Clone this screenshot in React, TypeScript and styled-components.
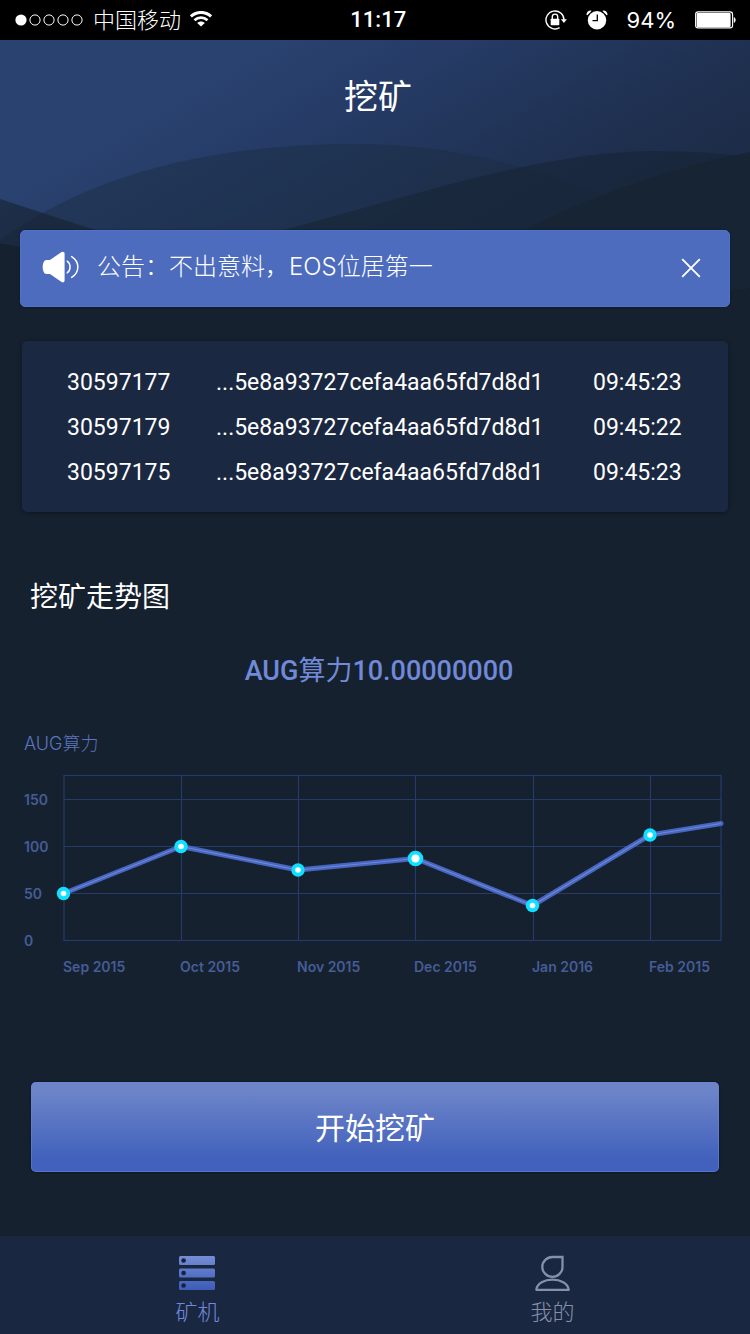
import React, { useState } from 'react';
import styled, { createGlobalStyle, css } from 'styled-components';

const sans = '"Inter", "Noto Sans CJK SC", sans-serif';
const digits = '"Roboto", "Noto Sans CJK SC", sans-serif';

const GlobalStyle = createGlobalStyle`
  *, *::before, *::after { box-sizing: border-box; }
  body { margin: 0; background: #16212f; }
  button { border: 0; padding: 0; background: none; font: inherit; color: inherit; cursor: pointer; }
`;

const Screen = styled.div`
  position: relative;
  display: flex;
  flex-direction: column;
  min-height: 100vh;
  background: #16212f;
  color: #fff;
  font-family: ${sans};
`;

const StatusBar = styled.div`
  position: relative;
  display: flex;
  align-items: center;
  justify-content: space-between;
  height: 40px;
  padding: 0 14px;
  background: #000;
  font-size: 22px;
  line-height: 40px;
`;

const StatusGroup = styled.div<{ $gap: number }>`
  display: flex;
  align-items: center;
  gap: ${(p) => p.$gap}px;
`;

const Carrier = styled.span`
  font-weight: 300;
`;

const Time = styled.time`
  font-family: ${digits};
  font-weight: 500;
`;

const Waves = styled.svg`
  position: absolute;
  top: 40px;
  left: 0;
  width: 100%;
  height: 260px;
`;

const Main = styled.main`
  position: relative;
  flex: 1;
  display: flex;
  flex-direction: column;
`;

const PageHeader = styled.header`
  height: 190px;
  padding: 32px 0 0 6px;
  text-align: center;
`;

const PageTitle = styled.h1`
  margin: 0;
  font-size: 34px;
  line-height: 50px;
  font-weight: 400;
`;

const Notice = styled.div`
  display: flex;
  align-items: center;
  height: 77px;
  margin: 0 20px;
  padding: 0 28px 2px 21px;
  border: 1px solid #5271cb;
  border-radius: 5px;
  background: #4d6cbe;
  box-shadow: 0 0 2px rgba(0, 0, 0, 0.4);
`;

const NoticeText = styled.p`
  flex: 1;
  margin: 0 0 0 17px;
  padding-bottom: 2px;
  font-size: 24px;
  line-height: 36px;
  font-weight: 300;
`;

const CloseButton = styled.button`
  display: flex;
  width: 20px;
  height: 20px;
`;

const LogCard = styled.section`
  margin: 34px 22px 0;
  padding: 19px 45px 17px;
  border-radius: 5px;
  background: #1b2842;
  box-shadow: 0 1px 4px rgba(0, 0, 0, 0.4);
`;

const LogTable = styled.table`
  width: 100%;
  table-layout: fixed;
  border-collapse: collapse;
  font-family: ${digits};
  font-size: 23px;
  line-height: 45px;
`;

const LogCell = styled.td<{ $width?: string }>`
  width: ${(p) => p.$width ?? 'auto'};
  height: 45px;
  padding: 0;
  white-space: nowrap;
`;

const SectionTitle = styled.h2`
  margin: 65px 30px 0;
  font-size: 28px;
  line-height: 40px;
  font-weight: 400;
`;

const HashPower = styled.p`
  margin: 34px 0 0 8px;
  text-align: center;
  font-family: ${digits};
  font-size: 27px;
  line-height: 40px;
  font-weight: 500;
  color: #7089d8;
`;

const HashUnit = styled.span`
  font-weight: 400;
`;

const AxisTitle = styled.p`
  margin: 39px 24px 0;
  font-size: 18px;
  line-height: 28px;
  font-weight: 300;
  color: #5a74bd;
`;

const Chart = styled.svg`
  display: block;
  width: 100%;
  height: auto;
  font-family: "Inter", sans-serif;
  font-size: 14px;
  font-weight: 600;
`;

const StartButton = styled.button`
  height: 90px;
  margin: 92px 31px 64px;
  padding-top: 2px;
  border-radius: 5px;
  background: linear-gradient(#6d84c8 10%, #4161bc 85%);
  box-shadow: 0 0 2px #05080f, inset 0 0 0 1px rgba(104, 136, 228, 0.5);
  font-size: 30px;
  line-height: 44px;
  color: #fff;
`;

const TabBar = styled.nav`
  position: relative;
  display: flex;
  height: 98px;
  padding: 0 20px;
  background: #1a2741;
`;

const Tab = styled.button<{ $active: boolean }>`
  flex: 1;
  display: flex;
  flex-direction: column;
  align-items: center;
  padding-top: 18px;
  font-size: 22px;
  line-height: 32px;
  font-weight: 300;
  ${(p) => (p.$active ? css`color: #7089dc;` : css`color: #8590aa;`)}

  svg { margin-bottom: 4px; }
`;

const SignalDots = () => (
  <svg width="70" height="14" viewBox="0 0 70 14" aria-label="Signal">
    <circle cx="7" cy="7" r="5.6" fill="#fff" />
    {[21, 35, 49, 63].map((x) => (
      <circle key={x} cx={x} cy="7" r="5.1" fill="none" stroke="#fff" strokeWidth="1" />
    ))}
  </svg>
);

const WifiIcon = () => (
  <svg width="22" height="18" viewBox="0 0 22 18" fill="none" stroke="#fff" aria-label="Wi-Fi">
    <path d="M.9 5.400C6.600 .1 15.400 .1 21.100 5.400" strokeWidth="3" />
    <path d="M4.500 9.200c3.700-3.400 9.300-3.400 13 0" strokeWidth="2.800" />
    <path d="M11 15.600 7.200 11.900c2.200-2 5.400-2 7.600 0z" fill="#fff" stroke="none" />
  </svg>
);

const LockIcon = () => (
  <svg width="22" height="20" viewBox="0 0 22 20" fill="none" stroke="#fff" aria-label="Rotation lock">
    <path d="M14.600 17.700A9 9 0 1 1 19 10" strokeWidth="1.400" />
    <path d="M15.900 9.300h6L18.900 13z" fill="#fff" stroke="none" />
    <rect x="5.700" y="8.700" width="8.600" height="6.500" rx=".6" fill="#fff" stroke="none" />
    <path d="M7.300 9V6.800a2.700 2.700 0 0 1 5.400 0V9" strokeWidth="1.400" />
  </svg>
);

const AlarmIcon = () => (
  <svg width="22" height="20" viewBox="0 0 22 20" aria-label="Alarm">
    <circle cx="11" cy="10.300" r="9.200" fill="#fff" />
    <path d="M.5 5C.3 2.300 2.300.3 5.200.5L5.300 1.200 1.300 5.200zM21.500 5C21.700 2.300 19.700.3 16.800.5l-.1.700 4 4z" fill="#fff" />
    <path d="M11.300 4.500v6.200H6.500" fill="none" stroke="#000" strokeWidth="1.300" />
  </svg>
);

const BatteryIcon = () => (
  <svg width="41" height="18" viewBox="0 0 41 18" aria-label="Battery">
    <rect x=".6" y=".9" width="37" height="16" rx="2.500" fill="none" stroke="#fff" strokeWidth="1.100" />
    <rect x="1.600" y="1.900" width="34" height="14" rx="1" fill="#fff" />
    <path d="M38.800 6c2.400.9 2.400 5.100 0 6z" fill="#fff" />
  </svg>
);

const SpeakerIcon = () => (
  <svg width="38" height="34" viewBox="0 0 38 34" aria-hidden="true">
    <path d="M4.500 9H8L19.200 1.200C20.800.1 22.600.8 22.600 2.600V29.400c0 1.800-1.800 2.500-3.400 1.400L8 23H4.500C2 23 .7 19.600.7 16S2 9 4.500 9z" fill="#fff" />
    <path d="M25.200 10.200c3.800 2.600 3.800 9 0 11.600M29.600 5.600c8.300 5 8.300 15.800 0 20.800" fill="none" stroke="#fff" strokeWidth="1.500" strokeLinecap="round" />
  </svg>
);

const CloseIcon = () => (
  <svg width="20" height="20" viewBox="0 0 20 20" aria-hidden="true">
    <path d="M1.200 1.200l17.600 17.600M18.800 1.200l-17.600 17.600" stroke="#fff" strokeWidth="1.900" />
  </svg>
);

const MinerIcon = () => (
  <svg width="38" height="38" viewBox="0 0 38 38" aria-hidden="true">
    <defs>
      <linearGradient id="miner" x1="0" y1="0" x2="0" y2="36" gradientUnits="userSpaceOnUse">
        <stop offset="0" stopColor="#7890d6" />
        <stop offset="1" stopColor="#3d5cb8" />
      </linearGradient>
    </defs>
    {[2, 14.500, 27].map((y) => (
      <g key={y}>
        <rect x="0" y={y} width="36" height="9" rx="1.500" fill="url(#miner)" />
        <circle cx="4.600" cy={y + 4.500} r="2.300" fill="#18233b" />
      </g>
    ))}
  </svg>
);

const ProfileIcon = () => (
  <svg width="36" height="38" viewBox="0 0 36 38" fill="none" stroke="#8490ac" strokeWidth="2.300" aria-hidden="true">
    <path d="M27.500 3v9.800A10.100 9.900 0 1 1 17.500 3z" />
    <path d="M1.300 35.800C2.500 22.200 32.500 22.200 33.700 35.800z" strokeLinejoin="round" />
  </svg>
);

const WaveBackground = () => (
  <Waves viewBox="0 40 750 260" preserveAspectRatio="none" aria-hidden="true">
    <defs>
      <linearGradient id="dusk" x1="0" y1="0" x2="300" y2="520" gradientUnits="userSpaceOnUse">
        <stop offset=".28" stopColor="#2a4270" />
        <stop offset=".4" stopColor="#273d69" />
        <stop offset=".5" stopColor="#243961" />
        <stop offset=".7" stopColor="#1f3050" />
        <stop offset=".9" stopColor="#1b2a44" />
      </linearGradient>
    </defs>
    <path d="M0 40H750V288C500 310 200 280 0 243z" fill="url(#dusk)" />
    <path d="M0 240C110 160 250 144 355 144C480 144 570 180 680 226L750 256V288C500 310 200 280 0 243z" fill="#1b2c41" fillOpacity=".45" />
    <path d="M0 199L95 230L200 262V280L0 243z" fill="#16222f" fillOpacity=".6" />
    <path d="M200 256L283 230C400 200 540 151 655 151Q705 151 750 157V288C500 310 200 280 180 265z" fill="#172434" fillOpacity=".58" />
    <path d="M450 270C560 205 660 170 750 152V288Q600 300 450 290z" fill="#162433" fillOpacity=".85" />
  </Waves>
);

const logs = [
  { id: '30597177', hash: '...5e8a93727cefa4aa65fd7d8d1', time: '09:45:23' },
  { id: '30597179', hash: '...5e8a93727cefa4aa65fd7d8d1', time: '09:45:22' },
  { id: '30597175', hash: '...5e8a93727cefa4aa65fd7d8d1', time: '09:45:23' },
];

const months = ['Sep 2015', 'Oct 2015', 'Nov 2015', 'Dec 2015', 'Jan 2016', 'Feb 2015'];
const columns = [64, 181, 298, 415, 533, 650];
const levels = [
  { label: '150', y: 41 },
  { label: '100', y: 88 },
  { label: '50', y: 135 },
  { label: '0', y: 182 },
];
const points = [
  { x: 63.500, y: 135.500 },
  { x: 181, y: 88.500 },
  { x: 298, y: 112 },
  { x: 415.500, y: 100.500, large: true },
  { x: 532.500, y: 147.500 },
  { x: 650, y: 77 },
];

const TrendChart = () => {
  const line = [...points.map((p) => `${p.x},${p.y}`), '721,65.500'].join(' ');
  return (
    <Chart viewBox="0 0 750 232" role="img" aria-label="挖矿走势图">
      <g stroke="#263b6c" strokeWidth="1.200" fill="none">
        <rect x="64" y="17.500" width="657" height="165" />
        {levels.slice(0, 3).map((l) => (
          <path key={l.label} d={`M64 ${l.y + 0.5}H721`} />
        ))}
        {columns.slice(1).map((x) => (
          <path key={x} d={`M${x + 0.5} 17.500V182.500`} />
        ))}
      </g>
      <polyline points={line} fill="none" stroke="#4765c2" strokeWidth="5" strokeLinecap="round" strokeLinejoin="round" />
      <polyline points={line} fill="none" stroke="#6f88cf" strokeWidth="1.200" />
      {points.map((p) => (
        <g key={p.x}>
          <circle cx={p.x} cy={p.y} r={p.large ? 7.800 : 6.700} fill="#0fe0ff" />
          <circle cx={p.x} cy={p.y} r={p.large ? 4 : 2.800} fill="#fff" />
        </g>
      ))}
      <g fill="#455c96">
        {levels.map((l) => (
          <text key={l.label} x="24" y={l.y + 6}>{l.label}</text>
        ))}
        {months.map((m, i) => (
          <text key={m} x={columns[i] - 1} y="214">{m}</text>
        ))}
      </g>
    </Chart>
  );
};

export default function App() {
  const [noticeOpen, setNoticeOpen] = useState(true);
  const [tab, setTab] = useState('miner');

  return (
    <Screen>
      <GlobalStyle />
      <WaveBackground />
      <StatusBar>
        <StatusGroup $gap={9}>
          <SignalDots />
          <Carrier>中国移动</Carrier>
          <WifiIcon />
        </StatusGroup>
        <Time>11:17</Time>
        <StatusGroup $gap={19}>
          <LockIcon />
          <AlarmIcon />
          <span>94%</span>
          <BatteryIcon />
        </StatusGroup>
      </StatusBar>
      <Main>
        <PageHeader>
          <PageTitle>挖矿</PageTitle>
        </PageHeader>
        {noticeOpen && (
          <Notice>
            <SpeakerIcon />
            <NoticeText>公告：不出意料，EOS位居第一</NoticeText>
            <CloseButton type="button" aria-label="关闭" onClick={() => setNoticeOpen(false)}>
              <CloseIcon />
            </CloseButton>
          </Notice>
        )}
        <LogCard>
          <LogTable>
            <tbody>
              {logs.map((row) => (
                <tr key={row.id}>
                  <LogCell $width="149px">{row.id}</LogCell>
                  <LogCell>{row.hash}</LogCell>
                  <LogCell $width="90px">{row.time}</LogCell>
                </tr>
              ))}
            </tbody>
          </LogTable>
        </LogCard>
        <SectionTitle>挖矿走势图</SectionTitle>
        <HashPower>
          AUG<HashUnit>算力</HashUnit>10.00000000
        </HashPower>
        <AxisTitle>AUG算力</AxisTitle>
        <TrendChart />
        <StartButton type="button">开始挖矿</StartButton>
      </Main>
      <TabBar>
        <Tab type="button" $active={tab === 'miner'} onClick={() => setTab('miner')}>
          <MinerIcon />
          矿机
        </Tab>
        <Tab type="button" $active={tab === 'profile'} onClick={() => setTab('profile')}>
          <ProfileIcon />
          我的
        </Tab>
      </TabBar>
    </Screen>
  );
}
